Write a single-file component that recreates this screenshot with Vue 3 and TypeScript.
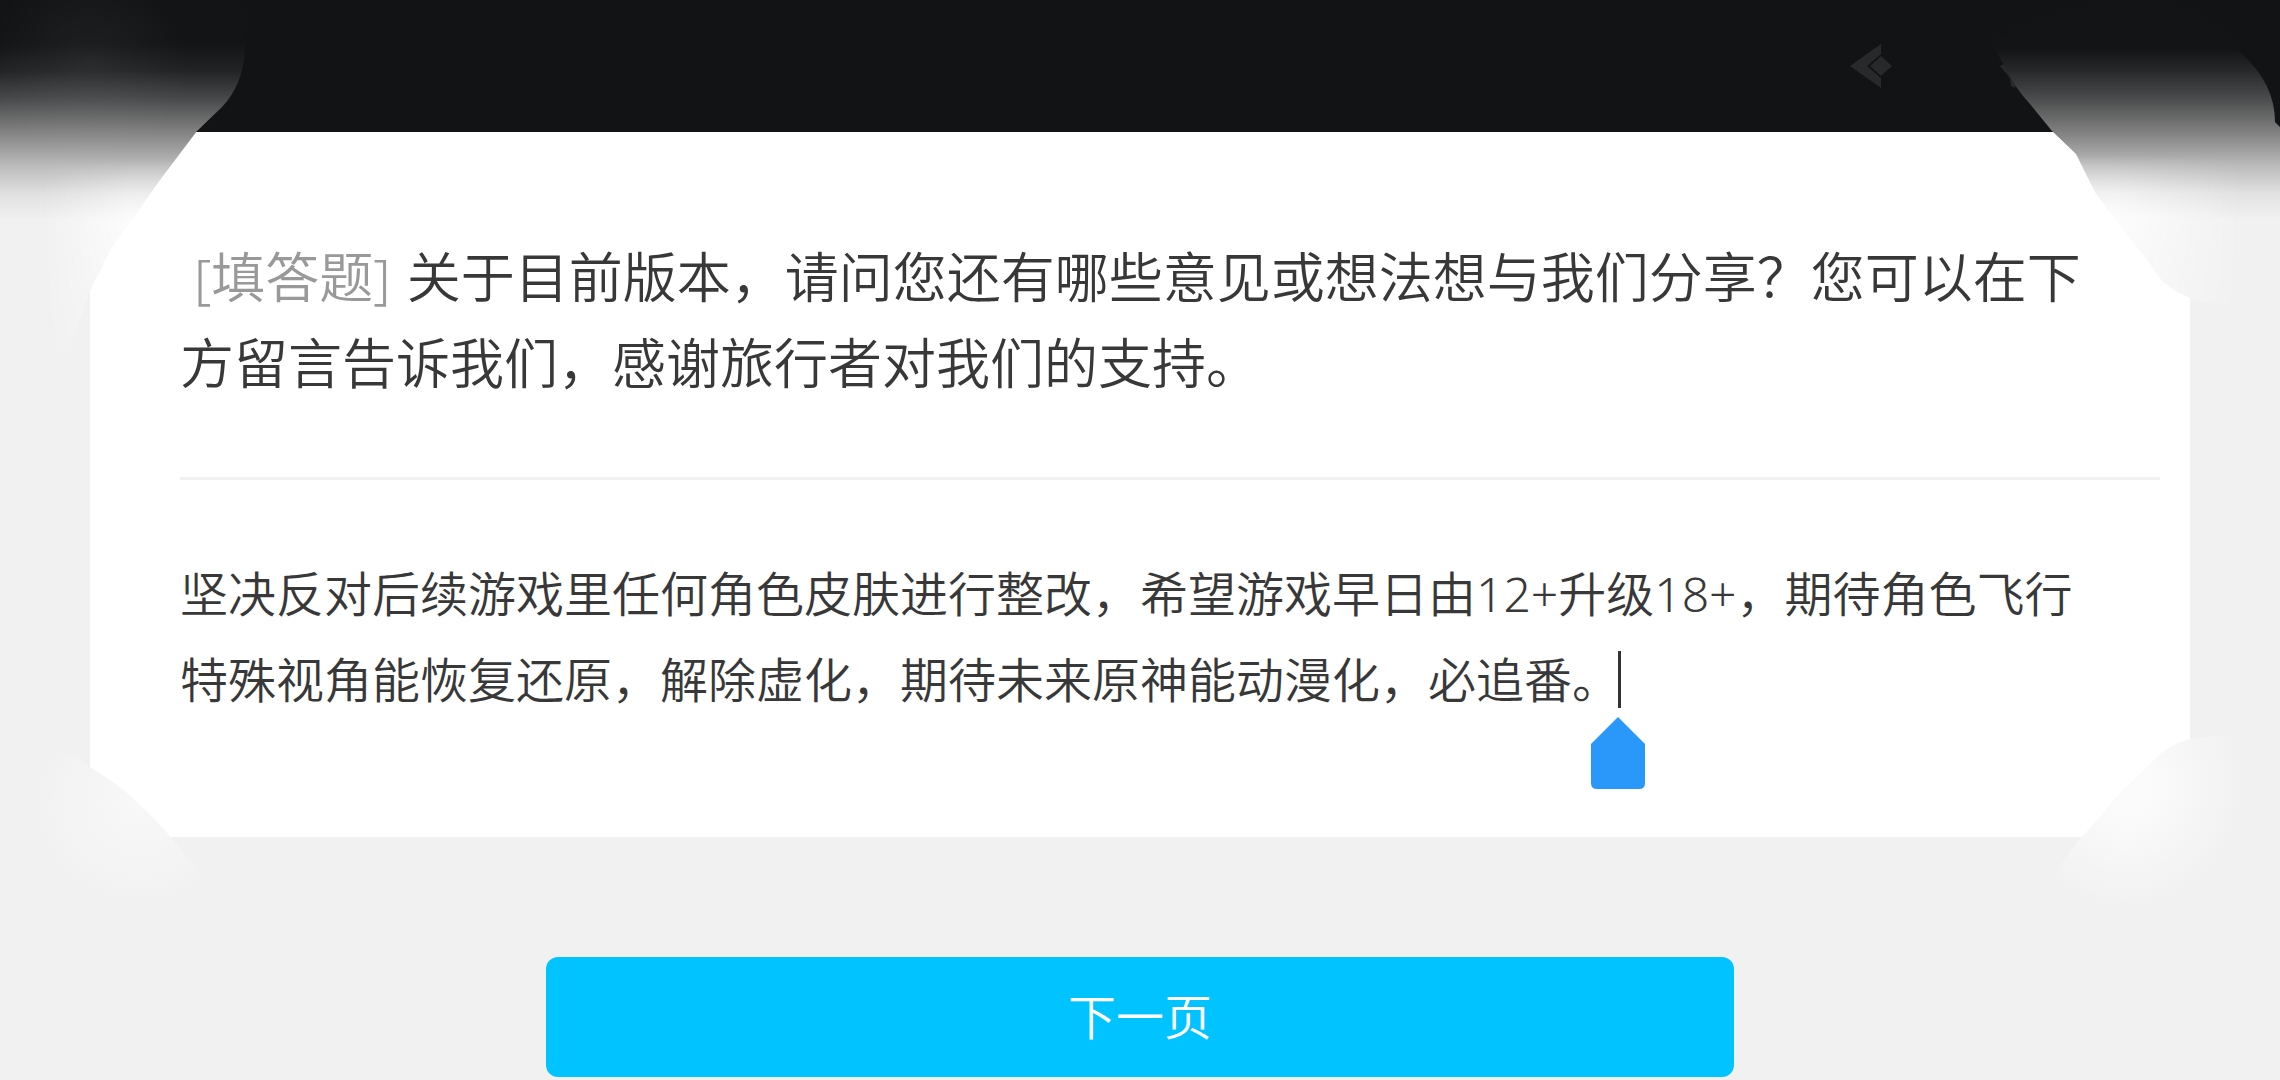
<script setup lang="ts">
import { ref } from 'vue'

const answer = ref(
  '坚决反对后续游戏里任何角色皮肤进行整改，希望游戏早日由12+升级18+，期待角色飞行特殊视角能恢复还原，解除虚化，期待未来原神能动漫化，必追番。'
)
</script>

<template>
  <div class="page">
    <header class="banner">
      <svg class="mark" viewBox="0 0 42 44" aria-hidden="true">
        <path d="M31 0 V10 L17 22 L31 34 V44 L0 22 Z" />
        <path d="M31 12 L42 22 L31 32 L20 22 Z" />
      </svg>
      <svg class="mark" viewBox="0 0 42 44" aria-hidden="true">
        <path d="M4 20 L18 34 L15 44 L11 42 L10 34 L0 22 Z" />
      </svg>
    </header>

    <form class="survey" @submit.prevent>
      <section class="card">
        <h1 class="question">
          <span class="kind">[填答题]</span><label for="answer">关于目前版本，请问您还有哪些意见或想法想与我们分享？您可以在下方留言告诉我们，感谢旅行者对我们的支持。</label>
        </h1>
        <div class="field">
          <textarea id="answer" v-model="answer" rows="2" spellcheck="false"></textarea>
          <span class="caret"></span>
          <svg class="handle" viewBox="0 0 54 72" aria-hidden="true">
            <path d="M27 0 L54 27 V66 Q54 72 48 72 H6 Q0 72 0 66 V27 Z" />
          </svg>
        </div>
      </section>

      <svg class="corner bottom-left" viewBox="0 0 240 180" aria-hidden="true">
        <defs>
          <radialGradient id="glow-bl" gradientUnits="userSpaceOnUse" cx="0" cy="0" r="1" gradientTransform="translate(140 75) scale(105 98)">
            <stop offset="0" stop-color="#f8f8f8" />
            <stop offset="0.5" stop-color="#f5f5f5" />
            <stop offset="1" stop-color="#f1f1f1" />
          </radialGradient>
        </defs>
        <path fill="url(#glow-bl)" d="M0 20 H50 Q72 24 90 38 Q118 55 134 70 Q158 92 172 110 Q198 138 216 180 H0 Z" />
      </svg>
      <svg class="corner bottom-right" viewBox="0 0 260 180" aria-hidden="true">
        <defs>
          <radialGradient id="glow-br" gradientUnits="userSpaceOnUse" cx="0" cy="0" r="1" gradientTransform="translate(105 55) scale(116 122)">
            <stop offset="0" stop-color="#fbfbfb" />
            <stop offset="0.3" stop-color="#fafafa" />
            <stop offset="0.7" stop-color="#f5f5f5" />
            <stop offset="1" stop-color="#f1f1f1" />
          </radialGradient>
        </defs>
        <path fill="url(#glow-br)" d="M260 4 H220 L170 10 Q148 16 135 30 L105 59 Q88 76 78 90 L58 112 Q38 140 5 180 H260 Z" />
      </svg>

      <button class="next" type="submit">下一页</button>
    </form>

    <svg class="corner top-left" viewBox="0 0 250 380" aria-hidden="true">
      <defs>
        <linearGradient id="fade-l" gradientUnits="userSpaceOnUse" x1="0" y1="0" x2="0" y2="220">
          <stop offset="0" stop-color="#121315" />
          <stop offset="0.2" stop-color="#131416" />
          <stop offset="0.32" stop-color="#222324" />
          <stop offset="0.45" stop-color="#48494a" />
          <stop offset="0.6" stop-color="#828282" />
          <stop offset="0.75" stop-color="#bababa" />
          <stop offset="0.88" stop-color="#e0e0e0" />
          <stop offset="1" stop-color="#f1f1f1" />
        </linearGradient>
        <linearGradient id="side-l" gradientUnits="userSpaceOnUse" x1="40" y1="0" x2="130" y2="0">
          <stop offset="0" stop-color="#fff" stop-opacity="0" />
          <stop offset="1" stop-color="#fff" stop-opacity="0.8" />
        </linearGradient>
        <linearGradient id="drop-l" gradientUnits="userSpaceOnUse" x1="0" y1="160" x2="0" y2="370">
          <stop offset="0" stop-color="#000" />
          <stop offset="0.3" stop-color="#fff" />
          <stop offset="0.5" stop-color="#ddd" />
          <stop offset="1" stop-color="#555" />
        </linearGradient>
        <radialGradient id="sheen-l" gradientUnits="userSpaceOnUse" cx="90" cy="60" r="100">
          <stop offset="0" stop-color="#fff" stop-opacity="0.05" />
          <stop offset="1" stop-color="#fff" stop-opacity="0" />
        </radialGradient>
        <mask id="mask-l"><rect width="250" height="380" fill="url(#drop-l)" /></mask>
        <path id="shape-l" d="M0 0 H245 V50 Q243 85 222 107 L197 131 L160 180 L130 222 Q110 246 101 270 Q91 285 87 301 L76 333 Q62 362 38 369 L0 372 Z" />
      </defs>
      <use href="#shape-l" fill="url(#fade-l)" />
      <use href="#shape-l" fill="url(#side-l)" mask="url(#mask-l)" />
      <use href="#shape-l" fill="url(#sheen-l)" />
    </svg>

    <svg class="corner top-right" viewBox="0 0 290 310" aria-hidden="true">
      <defs>
        <linearGradient id="fade-r" gradientUnits="userSpaceOnUse" x1="0" y1="0" x2="0" y2="220">
          <stop offset="0" stop-color="#121315" />
          <stop offset="0.22" stop-color="#131416" />
          <stop offset="0.32" stop-color="#272829" />
          <stop offset="0.45" stop-color="#4b4c4d" />
          <stop offset="0.6" stop-color="#808080" />
          <stop offset="0.75" stop-color="#bababa" />
          <stop offset="0.88" stop-color="#e2e2e2" />
          <stop offset="1" stop-color="#f1f1f1" />
        </linearGradient>
        <linearGradient id="side-r" gradientUnits="userSpaceOnUse" x1="120" y1="0" x2="255" y2="0">
          <stop offset="0" stop-color="#fff" stop-opacity="0.85" />
          <stop offset="1" stop-color="#fff" stop-opacity="0" />
        </linearGradient>
        <linearGradient id="drop-r" gradientUnits="userSpaceOnUse" x1="0" y1="155" x2="0" y2="305">
          <stop offset="0" stop-color="#000" />
          <stop offset="0.4" stop-color="#fff" />
          <stop offset="1" stop-color="#bbb" />
        </linearGradient>
        <mask id="mask-r"><rect width="290" height="310" fill="url(#drop-r)" /></mask>
        <path id="shape-r" d="M0 40 L100 0 H190 Q225 24 252 54 Q285 84 285 122 L290 127 V304 H235 Q196 302 175 283 Q166 275 160 263 L125 219 L105 192 L86 154 L62 131 L40 104 Q25 88 15 67 Z" />
      </defs>
      <use href="#shape-r" fill="url(#fade-r)" />
      <use href="#shape-r" fill="url(#side-r)" mask="url(#mask-r)" />
    </svg>
  </div>
</template>

<style>
body {
  margin: 0;
  background: #f1f1f1;
}
</style>

<style scoped>
.page {
  position: relative;
  min-height: 100vh;
  box-sizing: border-box;
  overflow: hidden;
  background: #f1f1f1;
  color: #383838;
  font-family: "Noto Sans", "Noto Sans CJK SC", sans-serif;
  font-weight: 350;
}

.banner {
  display: flex;
  justify-content: flex-end;
  align-items: center;
  gap: 108px;
  height: 132px;
  box-sizing: border-box;
  padding-right: 238px;
  background: #121315;
}

.mark {
  width: 42px;
  height: 44px;
  fill: #28292b;
}

.survey {
  position: relative;
  display: flex;
  flex-direction: column;
  align-items: center;
  gap: 120px;
}

.card {
  align-self: stretch;
  box-sizing: border-box;
  margin: 0 90px;
  padding: 102px 30px 114px 90px;
  background: #fff;
}

.question {
  margin: 0;
  padding: 0 48px 71px 0;
  border-bottom: 3px solid #f1f1f1;
  font-size: 54px;
  font-weight: inherit;
  line-height: 86px;
}

.kind {
  margin: 0 16px 0 14px;
  color: #999;
}

.field {
  position: relative;
  margin-top: 71px;
  padding-right: 60px;
}

textarea {
  display: block;
  width: 100%;
  height: 172px;
  box-sizing: border-box;
  padding: 0;
  border: 0;
  outline: 0;
  resize: none;
  overflow: hidden;
  background: transparent;
  color: inherit;
  font: inherit;
  font-size: 48px;
  line-height: 86px;
}

.caret {
  position: absolute;
  left: 1438px;
  top: 100px;
  width: 3px;
  height: 57px;
  background: #333;
}

.handle {
  position: absolute;
  left: 1411px;
  top: 166px;
  width: 54px;
  height: 72px;
  fill: #2a98fb;
}

.next {
  width: 60%;
  max-width: 1188px;
  height: 120px;
  padding: 0 0 6px;
  border: 0;
  border-radius: 12px;
  background: #00c3ff;
  color: #fff;
  font: inherit;
  font-size: 48px;
}

.corner {
  position: absolute;
  pointer-events: none;
}

.top-left {
  top: 0;
  left: 0;
  width: 250px;
  height: 380px;
}

.top-right {
  top: 0;
  right: 0;
  width: 290px;
  height: 310px;
}

.bottom-left {
  left: 0;
  bottom: 168px;
  width: 240px;
  height: 180px;
}

.bottom-right {
  right: 0;
  bottom: 168px;
  width: 260px;
  height: 180px;
}
</style>
